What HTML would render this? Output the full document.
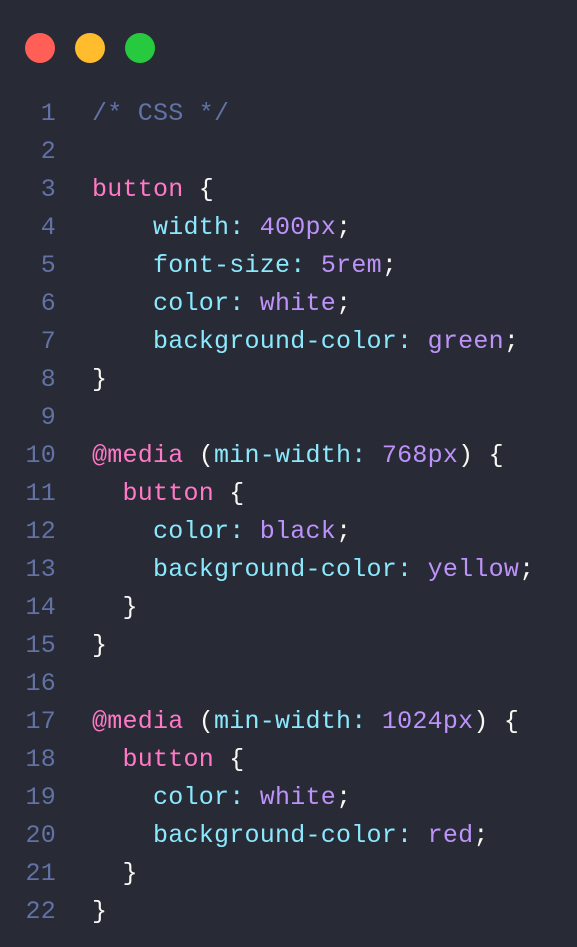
<!DOCTYPE html>
<html><head><meta charset="utf-8"><style>
html,body{margin:0;padding:0;background:#282a36;width:577px;height:947px;overflow:hidden}
.dot{position:absolute;top:33px;width:30px;height:30px;border-radius:50%}
.code{position:absolute;left:0;top:95px;font-family:"Liberation Mono",monospace;font-size:25px;letter-spacing:0.25px;line-height:38px;white-space:pre;color:#f8f8f2}
.ln{display:inline-block;width:56px;text-align:right;color:#6272a4;margin-right:36px}
.c{color:#6272a4}.k{color:#ff79c6}.p{color:#8be9fd}.v{color:#bd93f9}
</style></head><body>
<div class="dot" style="left:25px;background:#ff5f56"></div>
<div class="dot" style="left:75px;background:#ffbd2e"></div>
<div class="dot" style="left:125px;background:#27c93f"></div>
<div class="code"><div><span class="ln">1</span><span class="c">/* CSS */</span></div><div><span class="ln">2</span></div><div><span class="ln">3</span><span class="k">button</span> {</div><div><span class="ln">4</span>    <span class="p">width:</span> <span class="v">400px</span>;</div><div><span class="ln">5</span>    <span class="p">font-size:</span> <span class="v">5rem</span>;</div><div><span class="ln">6</span>    <span class="p">color:</span> <span class="v">white</span>;</div><div><span class="ln">7</span>    <span class="p">background-color:</span> <span class="v">green</span>;</div><div><span class="ln">8</span>}</div><div><span class="ln">9</span></div><div><span class="ln">10</span><span class="k">@media</span> (<span class="p">min-width:</span> <span class="v">768px</span>) {</div><div><span class="ln">11</span>  <span class="k">button</span> {</div><div><span class="ln">12</span>    <span class="p">color:</span> <span class="v">black</span>;</div><div><span class="ln">13</span>    <span class="p">background-color:</span> <span class="v">yellow</span>;</div><div><span class="ln">14</span>  }</div><div><span class="ln">15</span>}</div><div><span class="ln">16</span></div><div><span class="ln">17</span><span class="k">@media</span> (<span class="p">min-width:</span> <span class="v">1024px</span>) {</div><div><span class="ln">18</span>  <span class="k">button</span> {</div><div><span class="ln">19</span>    <span class="p">color:</span> <span class="v">white</span>;</div><div><span class="ln">20</span>    <span class="p">background-color:</span> <span class="v">red</span>;</div><div><span class="ln">21</span>  }</div><div><span class="ln">22</span>}</div></div>
</body></html>
